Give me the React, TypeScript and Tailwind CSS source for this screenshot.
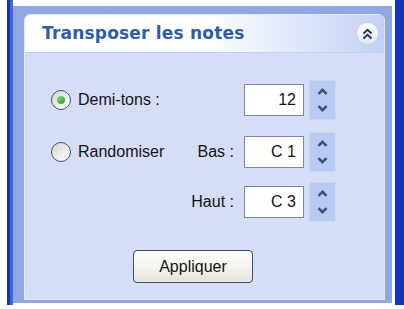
import React from 'react';

function Radio({ checked }: { checked?: boolean }) {
  return (
    <span className="flex h-[20px] w-[20px] items-center justify-center rounded-full border-[1.5px] border-[#44536a] bg-gradient-to-br from-[#d8d8d0] to-white">
      {checked && (
        <span className="h-[8px] w-[8px] rounded-full bg-gradient-to-br from-[#7fdc7a] to-[#1f9e25]" />
      )}
    </span>
  );
}

function Spinner() {
  return (
    <div className="flex h-[40px] w-[27px] flex-col items-center justify-center gap-[10px] rounded-[2px] border border-[#c9d6f5] bg-[#b9cbf2]">
      <svg width="11" height="7" viewBox="0 0 11 7">
        <path d="M1.5 5.8 L5.5 1.8 L9.5 5.8" fill="none" stroke="#3a5283" strokeWidth="2.6" />
      </svg>
      <svg width="11" height="7" viewBox="0 0 11 7">
        <path d="M1.5 1.2 L5.5 5.2 L9.5 1.2" fill="none" stroke="#3a5283" strokeWidth="2.6" />
      </svg>
    </div>
  );
}

function NumField({ value }: { value: string }) {
  return (
    <div className="flex items-center gap-[5px]">
      <div className="flex h-[32px] w-[60px] items-center justify-end border border-[#7b8798] bg-white pr-[7px] text-[16px] text-[#141414]">
        {value}
      </div>
      <Spinner />
    </div>
  );
}

export default function App() {
  const font = { fontFamily: '"Liberation Sans", Arial, sans-serif' };

  return (
    <div className="flex h-[309px] w-[404px] overflow-hidden bg-white" style={font}>
      <div className="w-[7px] shrink-0 bg-white" />
      <div className="w-[3px] shrink-0 h-[305px] bg-[#1333b8]" />
      <div className="w-[3px] shrink-0 h-[305px] bg-[#4566d4]" />

      {/* task pane area */}
      <div className="flex w-[379px] shrink-0 flex-col pt-[6px]">
        <div className="flex h-[297px] flex-col bg-[#8ea8e6] pl-[11px] pr-[7px] pt-[8px] pb-[3px]">
          <div className="flex flex-1 flex-col overflow-hidden rounded-t-[6px] border border-[#e4eafa]">
            {/* header */}
            <div className="flex h-[38px] shrink-0 items-center justify-between border-b border-[#c2cff2] bg-gradient-to-r from-white via-white to-[#c3d1f5] pl-[17px] pr-[5px]">
              <span
                className="text-[17px] font-bold tracking-[0.2px] text-[#2c5caf]"
                style={{ fontFamily: '"DejaVu Sans", Verdana, sans-serif' }}
              >
                Transposer les notes
              </span>
              <span className="flex h-[23px] w-[23px] items-center justify-center rounded-full border border-[#c6cfe3] bg-gradient-to-b from-white to-[#e2e8f6]">
                <svg width="11" height="12" viewBox="0 0 11 12">
                  <path d="M1.5 5.5 L5.5 1.8 L9.5 5.5 M1.5 10.5 L5.5 6.8 L9.5 10.5" fill="none" stroke="#23365c" strokeWidth="2" />
                </svg>
              </span>
            </div>

            {/* body */}
            <div className="flex flex-1 flex-col bg-[#d6ddf6] pt-[27px] text-[16px] text-[#141414]">
              <div className="flex h-[40px] items-center pl-[26px] pr-[48px]">
                <Radio checked />
                <span className="ml-[7px]">Demi-tons :</span>
                <div className="ml-auto">
                  <NumField value="12" />
                </div>
              </div>

              <div className="mt-[12px] flex h-[40px] items-center pl-[26px] pr-[48px]">
                <Radio />
                <span className="ml-[7px]">Randomiser</span>
                <span className="ml-auto mr-[10px]">Bas :</span>
                <NumField value="C 1" />
              </div>

              <div className="mt-[10px] flex h-[40px] items-center pr-[48px]">
                <span className="ml-auto mr-[10px]">Haut :</span>
                <NumField value="C 3" />
              </div>

              <div className="mt-[28px] pl-[108px]">
                <button className="flex h-[33px] w-[120px] items-center justify-center rounded-[4px] border border-[#3b4d6b] bg-gradient-to-b from-white via-[#f6f4ee] to-[#e6e3da] text-[16px] text-[#141414]">
                  Appliquer
                </button>
              </div>
            </div>
          </div>
        </div>
      </div>

      <div className="w-[3px] shrink-0 bg-white" />
      <div className="h-[305px] w-[9px] shrink-0 bg-[#1333b8]" />
    </div>
  );
}
